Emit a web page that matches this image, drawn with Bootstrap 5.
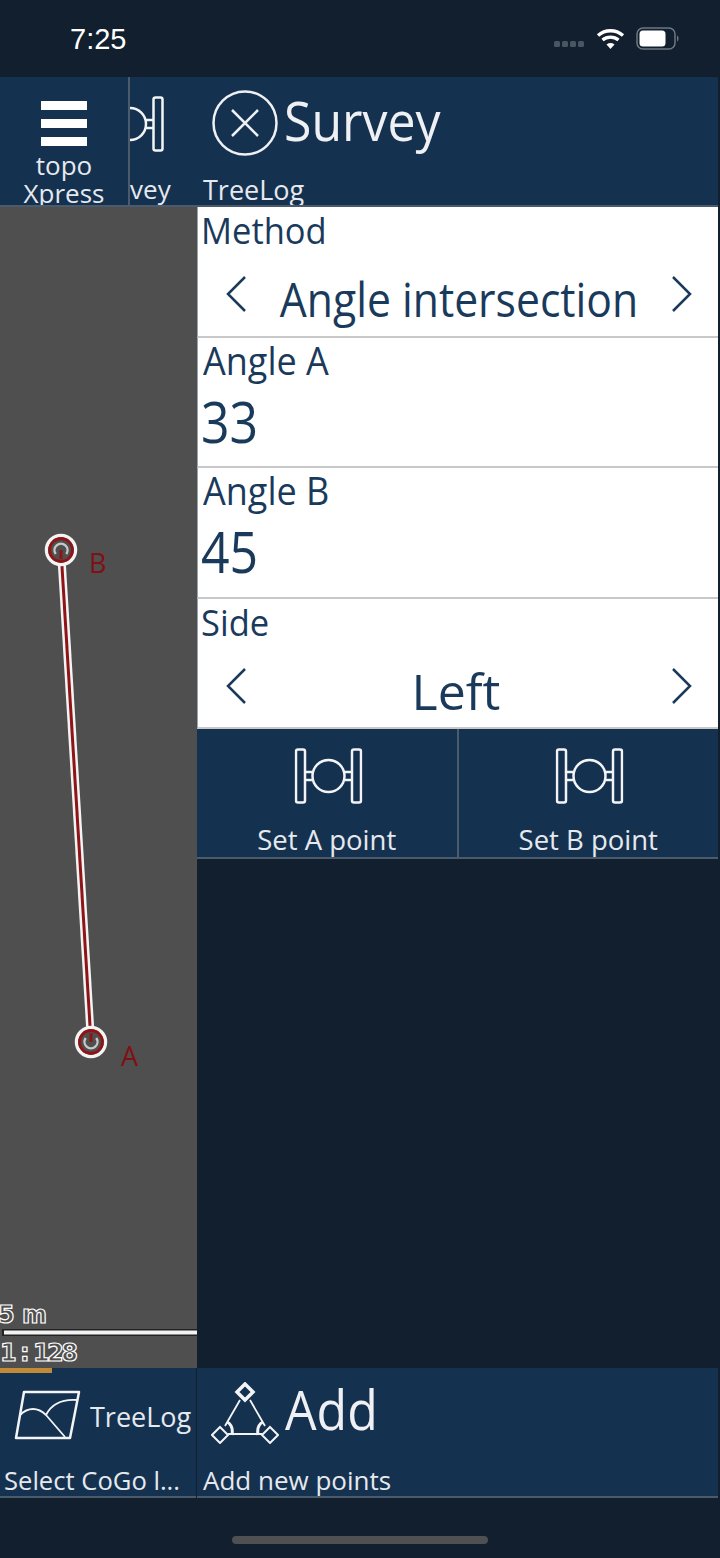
<!DOCTYPE html>
<html lang="en">
<head>
  <meta charset="UTF-8" />
  <meta name="viewport" content="width=device-width, initial-scale=1.0"/>
  <title>topoXpress Survey</title>
  <link href="https://cdn.jsdelivr.net/npm/bootstrap@5.3.3/dist/css/bootstrap.min.css" rel="stylesheet">
  <style>
    body {
      margin: 0;
      background: #111f2e;
      font-family: "Open Sans", sans-serif;
      color: #fff;
    }
    .screen { width: 720px; height: 1558px; overflow: hidden; }
    .status-bar { flex: 0 0 77px; padding: 0 38px 0 70px; }
    .status-time { font-family: "Liberation Sans", sans-serif; font-size: 29px; line-height: 1; margin-top: 2px; }
    .left-pane { width: 197px; }
    .right-pane { width: 523px; padding-right: 2px; }
    .tile { background: #153150; border-bottom: 2px solid #4b5b6c; flex: 0 0 130px; height: 130px; position: relative; overflow: hidden; }
    .tile-menu { width: 130px; border-right: 2px solid #4b5b6c; text-align: center; }
    .tile-clip { width: 67px; border-right: 2px solid #4b5b6c; }
    .tile-scrolled { width: 130px; margin-left: -65px; text-align: center; }
    .tile-wide { width: 196px; }
    .menu-icon { margin-top: 24px; }
    .clip-icon { margin-top: 19px; }
    .tile-label { font-size: 26px; line-height: 28px; color: #e6e9ed; white-space: nowrap; }
    .menu-label { margin-top: 4px; }
    .clip-label { margin-top: 23px; }
    .orange-top { position: absolute; top: 0; right: 2px; width: 18px; height: 5px; background: #c08a37; }
    .orange-bottom { position: absolute; top: 0; left: 0; width: 52px; height: 5px; background: #c08a37; }
    .map-area { height: 1161px; background: #4f4f4f; position: relative; overflow: hidden; }
    .map-svg { position: absolute; top: 0; left: 0; }
    .head-row { padding: 12px 0 0 15px; height: 80px; }
    .add-row { padding: 14px 0 0 14px; height: 76px; }
    .log-row { padding: 22px 0 0 14px; }
    .big-title { font-size: 50px; line-height: 1; color: #eef0f3; margin-left: 6px; margin-top: -6px; transform: scaleY(1.09); }
    .add-title { margin-top: -8px; }
    .tile-sub { font-size: 27px; line-height: 28px; padding-left: 6px; color: #e6e9ed; white-space: nowrap; }
    .sub-head { margin-top: 19px; }
    .sub-log { padding-left: 8px; margin-top: 4px; }
    .sub-cogo { font-size: 25.6px; padding-left: 4px; margin-top: 27px; }
    .sub-add { font-size: 26px; margin-top: 22px; }
    .field { flex: 0 0 130.5px; height: 130.5px; background: #fff; color: #1a3a5c; border-bottom: 2px solid #c8c8c8; border-left: 1px solid #9aa3ad; overflow: hidden; }
    .field-label { font-size: 36px; line-height: 36px; padding-left: 5px; padding-top: 5px; transform-origin: left center; transform: scaleY(1.06); }
    .label-picker { font-size: 34.5px; padding-left: 3px; }
    .field-value { font-size: 50px; line-height: 60px; padding-left: 3px; margin-top: 13px; transform-origin: left center; transform: scaleY(1.13); }
    .picker-row { padding: 21px 25px 0 27px; }
    .picker-value { font-size: 42.7px; line-height: 60px; transform: scaleY(1.115); }
    .picker-big { font-size: 50px; transform: translateX(-3px); }
    .chev { margin-top: -10px; }
    .set-tile { flex: 1 1 0; height: 130px; background: #153150; border-bottom: 2px solid #4b5b6c; text-align: center; padding-top: 19px; }
    .set-tile + .set-tile { border-left: 2px solid #4b5b6c; }
    .set-icon { transform: translateX(1.5px); }
    .set-label { font-size: 27.5px; line-height: 28px; margin-top: 22px; color: #e6e9ed; }
    .home-row { flex: 0 0 60px; padding-top: 38px; }
    .home-bar { width: 256px; height: 8px; border-radius: 4px; background: #4f5052; }
    .icon-defs { position: absolute; }
  </style>
</head>
<body>
<div class="screen d-flex flex-column">

  <!-- status bar -->
  <div class="status-bar d-flex align-items-center justify-content-between">
    <div class="status-time">7:25</div>
    <svg width="128" height="24" viewBox="0 0 128 24">
      <g fill="#4a5562">
        <rect x="0" y="14" width="6" height="6" rx="1.5"/><rect x="8" y="14" width="6" height="6" rx="1.5"/>
        <rect x="16" y="14" width="6" height="6" rx="1.5"/><rect x="24" y="14" width="6" height="6" rx="1.5"/>
      </g>
      <g fill="none" stroke="#fff" stroke-width="3.4">
        <path d="M44 8.500a19 19 0 0 1 25 0"/><path d="M48.500 13a12.500 12.500 0 0 1 16 0"/>
      </g>
      <path d="M52.500 17.500a7 7 0 0 1 8 0l-4 4.500z" fill="#fff"/>
      <rect x="83" y="1" width="38" height="21" rx="6" fill="none" stroke="#6f7883" stroke-width="1.500"/>
      <rect x="85.500" y="3.500" width="26" height="16" rx="3.500" fill="#fff"/>
      <path d="M123 8.500c2 .5 2 5.500 0 6z" fill="#6f7883"/>
    </svg>
  </div>

  <div class="d-flex flex-grow-1">
    <!-- left side -->
    <div class="left-pane d-flex flex-column">
      <div class="d-flex">
        <div class="tile tile-menu">
          <svg class="d-block mx-auto menu-icon" width="46" height="46" viewBox="0 0 46 46">
            <g fill="#fff"><rect y="0" width="46" height="9"/><rect y="18" width="46" height="9"/><rect y="36" width="46" height="9"/></g>
          </svg>
          <div class="tile-label menu-label">topo<br>Xpress</div>
        </div>
        <div class="tile tile-clip">
          <div class="tile-scrolled">
            <svg class="d-block mx-auto clip-icon" width="68" height="56" viewBox="0 0 68 56">
              <use href="#point-icon"/>
            </svg>
            <div class="tile-label clip-label">Survey</div>
          </div>
          <div class="orange-top"></div>
        </div>
      </div>

      <div class="map-area">
        <svg class="map-svg" width="197" height="1161" viewBox="0 0 197 1161">
          <line x1="61" y1="343" x2="91" y2="835" stroke="#f4f4f4" stroke-width="8"/>
          <line x1="61" y1="343" x2="91" y2="835" stroke="#8f1418" stroke-width="3"/>
          <g fill="none">
            <circle cx="61" cy="343" r="14.500" fill="#4f4f4f" stroke="#f4f4f4" stroke-width="3.500"/>
            <circle cx="61" cy="343" r="11.500" stroke="#8f1418" stroke-width="2.800"/>
            <path d="M55.700 347a6.500 6.500 0 1 1 10.600 0" stroke="#c8c8c8" stroke-width="2.400"/>
            <line x1="61" y1="343" x2="61" y2="352" stroke="#8f1418" stroke-width="3"/>
            <circle cx="91" cy="835" r="14.500" fill="#4f4f4f" stroke="#f4f4f4" stroke-width="3.500"/>
            <circle cx="91" cy="835" r="11.500" stroke="#8f1418" stroke-width="2.800"/>
            <path d="M85.700 831a6.500 6.500 0 1 0 10.600 0" stroke="#c8c8c8" stroke-width="2.400"/>
            <line x1="91" y1="826" x2="91" y2="835" stroke="#8f1418" stroke-width="3"/>
          </g>
          <g font-family="Open Sans, sans-serif" font-size="27" fill="#7f1014">
            <text x="89" y="366">B</text>
            <text x="121" y="859">A</text>
          </g>
          <line x1="2" y1="1125.500" x2="197" y2="1125.500" stroke="#222" stroke-width="7"/>
          <line x1="4" y1="1125.500" x2="197" y2="1125.500" stroke="#f2f2f2" stroke-width="4"/>
          <g font-family="DejaVu Sans, sans-serif" font-size="24" font-weight="bold" fill="#4f4f4f" stroke="#fff" stroke-width="1.200">
            <text x="-2" y="1116" textLength="49">5 m</text>
            <text x="0" y="1154" textLength="78">1 : 128</text>
          </g>
        </svg>
      </div>

      <div class="tile tile-wide">
        <div class="orange-bottom"></div>
        <div class="log-row d-flex align-items-center">
          <svg width="68" height="50" viewBox="0 0 68 50" fill="none" stroke="#f2f4f6" stroke-width="2.500" stroke-linejoin="round">
            <path d="M10 2h55l-9 46H2z"/>
            <path d="M6 25c8-8 18-8 26 0l19 22M32 25c6-12 16-16 31-15" stroke-width="1.800"/>
          </svg>
          <div class="tile-sub sub-log">TreeLog</div>
        </div>
        <div class="tile-sub sub-cogo">Select CoGo l...</div>
      </div>
    </div>

    <!-- right side -->
    <div class="right-pane d-flex flex-column">
      <div class="tile">
        <div class="head-row d-flex align-items-center">
          <svg width="66" height="66" viewBox="0 0 66 66" fill="none" stroke="#eef0f3" stroke-width="2.500">
            <circle cx="33" cy="33" r="31.500"/><path d="M20 20l26 26M46 20L20 46"/>
          </svg>
          <div class="big-title">Survey</div>
        </div>
        <div class="tile-sub sub-head">TreeLog</div>
      </div>

      <div class="field">
        <div class="field-label label-picker">Method</div>
        <div class="picker-row d-flex align-items-center justify-content-between">
          <svg class="chev" width="22" height="38" viewBox="0 0 22 38" fill="none" stroke="#1a3a5c" stroke-width="2.500"><path d="M20 2L3 19l17 17"/></svg>
          <div class="picker-value">Angle intersection</div>
          <svg class="chev" width="22" height="38" viewBox="0 0 22 38" fill="none" stroke="#1a3a5c" stroke-width="2.500"><path d="M2 2l17 17L2 36"/></svg>
        </div>
      </div>
      <div class="field">
        <div class="field-label">Angle A</div>
        <div class="field-value">33</div>
      </div>
      <div class="field">
        <div class="field-label">Angle B</div>
        <div class="field-value">45</div>
      </div>
      <div class="field">
        <div class="field-label label-picker">Side</div>
        <div class="picker-row d-flex align-items-center justify-content-between">
          <svg class="chev" width="22" height="38" viewBox="0 0 22 38" fill="none" stroke="#1a3a5c" stroke-width="2.500"><path d="M20 2L3 19l17 17"/></svg>
          <div class="picker-value picker-big">Left</div>
          <svg class="chev" width="22" height="38" viewBox="0 0 22 38" fill="none" stroke="#1a3a5c" stroke-width="2.500"><path d="M2 2l17 17L2 36"/></svg>
        </div>
      </div>

      <div class="d-flex">
        <div class="set-tile">
          <svg class="d-block mx-auto set-icon" width="68" height="56" viewBox="0 0 68 56"><use href="#point-icon"/></svg>
          <div class="set-label">Set A point</div>
        </div>
        <div class="set-tile">
          <svg class="d-block mx-auto set-icon" width="68" height="56" viewBox="0 0 68 56"><use href="#point-icon"/></svg>
          <div class="set-label">Set B point</div>
        </div>
      </div>

      <div class="flex-grow-1"></div>

      <div class="tile">
        <div class="add-row d-flex align-items-center">
          <svg width="68" height="62" viewBox="0 0 68 62" fill="none" stroke="#f2f4f6">
            <path d="M29 18L14 44M39 18l15 26M17 52h34" stroke-width="1.800"/>
            <path d="M34 2l8 8-8 8-8-8z" stroke-width="3.500"/>
            <path d="M9 45l8 8-8 8-8-8zM59 45l8 8-8 8-8-8z" stroke-width="2"/>
            <path d="M16 40c4 2 6 7 5 13M52 40c-4 2-6 7-5 13" stroke-width="3"/>
          </svg>
          <div class="big-title add-title">Add</div>
        </div>
        <div class="tile-sub sub-add">Add new points</div>
      </div>
    </div>
  </div>

  <!-- home indicator -->
  <div class="home-row d-flex justify-content-center">
    <div class="home-bar"></div>
  </div>
</div>

<!-- shared survey point icon -->
<svg class="icon-defs" width="0" height="0">
  <symbol id="point-icon" viewBox="0 0 68 56">
    <g fill="none" stroke="#f2f4f6" stroke-width="2.500">
      <rect x="1.500" y="1.500" width="9" height="53" rx="2"/>
      <rect x="57.500" y="1.500" width="9" height="53" rx="2"/>
      <circle cx="34" cy="28" r="16"/>
      <path d="M10.500 24h8M10.500 32h8M49.500 24h8M49.500 32h8"/>
    </g>
  </symbol>
</svg>

<script src="https://cdn.jsdelivr.net/npm/bootstrap@5.3.3/dist/js/bootstrap.bundle.min.js"></script>
</body>
</html>
